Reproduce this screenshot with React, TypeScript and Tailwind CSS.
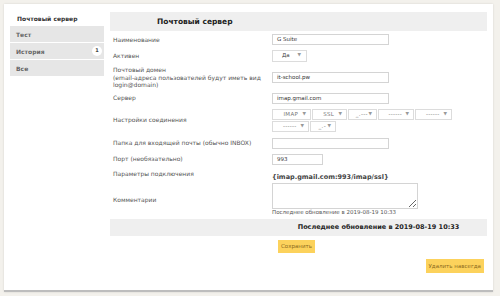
import React from 'react';

const font = { fontFamily: '"DejaVu Sans", Verdana, sans-serif' };

const Field = ({ value = '', w = 'w-[117px]' }: { value?: string; w?: string }) => (
    <div className={`${w} h-[11px] border border-[#d4d4d4] bg-white px-[4px] text-[5.5px] leading-[9px] text-[#333]`}>
        {value}
    </div>
);

const Select = ({ label, w }: { label: string; w: string }) => (
    <div className={`${w} h-[11px] border border-[#dcdcdc] bg-white flex items-center justify-between pl-[6px] pr-[4px] text-[5.5px] text-[#777]`}>
        <span className="flex-1 text-center tracking-[0.3px]">{label}</span>
        <span className="text-[4.5px] text-[#999]">▼</span>
    </div>
);

const Row = ({ label, h, children }: { label: React.ReactNode; h: string; children: React.ReactNode }) => (
    <div className={`flex items-center ${h}`}>
        <div className="w-[162px] pl-[3px] text-[6px] leading-[7.5px] text-[#555]">{label}</div>
        <div className="flex-1">{children}</div>
    </div>
);

const navItems = [
    { name: 'Тест' },
    { name: 'История', badge: '1' },
    { name: 'Все' },
];

export default function App() {
    return (
        <div className="w-[500px] h-[296px] bg-[#f3f1ec] pl-[4px] pt-[4px]" style={font}>
            <div className="w-[489px] h-[288px] bg-white border-b-2 border-[#bdbdbd] shadow-[0_0_2px_rgba(0,0,0,0.12)] flex gap-[6px] pl-[6px] pt-[8px]">
                {/* Sidebar */}
                <div className="w-[94px] flex flex-col">
                    <div className="h-[13px] pl-[7px] flex items-center text-[6px] font-bold text-[#333]">
                        Почтовый сервер
                    </div>
                    <div className="flex flex-col gap-[1px] pt-[1px]">
                        {navItems.map((it) => (
                            <div key={it.name} className="h-[16px] bg-[#e6e6e6] flex items-center justify-between pl-[6px] pr-[2px] text-[6px] font-bold text-[#666]">
                                <span>{it.name}</span>
                                {it.badge && (
                                    <span className="w-[10px] h-[10px] rounded-full bg-white flex items-center justify-center text-[5px] text-[#444]">
                                        {it.badge}
                                    </span>
                                )}
                            </div>
                        ))}
                    </div>
                </div>

                {/* Main form */}
                <div className="w-[377px] flex flex-col">
                    <div className="h-[19px] bg-[#efefef] flex items-center pl-[47px] text-[7.5px] font-bold text-[#222]">
                        Почтовый сервер
                    </div>
                    <div className="h-[1px]" />
                    <Row label="Наименование" h="h-[15px]">
                        <Field value="G Suite" />
                    </Row>
                    <Row label="Активен" h="h-[17px]">
                        <div className="w-[35px] h-[12px] border border-[#dcdcdc] flex items-center justify-between pl-[9px] pr-[5px] text-[5.5px] text-[#444]">
                            <span>Да</span>
                            <span className="text-[4.5px] text-[#999]">▼</span>
                        </div>
                    </Row>
                    <Row
                        label={
                            <>
                                Почтовый домен
                                <br />
                                (email-адреса пользователей будут иметь вид
                                <br />
                                login@domain)
                            </>
                        }
                        h="h-[27px]"
                    >
                        <Field value="it-school.pw" />
                    </Row>
                    <Row label="Сервер" h="h-[14px]">
                        <Field value="imap.gmail.com" />
                    </Row>
                    <Row label="Настройки соединения" h="h-[30px]">
                        <div className="flex flex-col gap-[1px]">
                            <div className="flex gap-[1px]">
                                <Select label="IMAP" w="w-[39px]" />
                                <Select label="SSL" w="w-[35px]" />
                                <Select label="_.---" w="w-[29px]" />
                                <Select label="------" w="w-[36px]" />
                                <Select label="------" w="w-[37px]" />
                            </div>
                            <div className="flex gap-[1px]">
                                <Select label="------" w="w-[37px]" />
                                <Select label="_.-" w="w-[26px]" />
                            </div>
                        </div>
                    </Row>
                    <Row label="Папка для входящей почты (обычно INBOX)" h="h-[16px]">
                        <Field />
                    </Row>
                    <Row label="Порт (необязательно)" h="h-[16px]">
                        <Field value="993" w="w-[51px]" />
                    </Row>
                    <Row label="Параметры подключения" h="h-[14px]">
                        <span className="text-[6.5px] font-bold text-[#444]">{'{imap.gmail.com:993/imap/ssl}'}</span>
                    </Row>
                    <Row label="Комментарии" h="h-[37px]">
                        <div className="flex flex-col">
                            <textarea readOnly className="block w-[146px] h-[26px] border border-[#d4d4d4] bg-white" />
                            <span className="text-[5.5px] leading-[7px] text-[#555]">Последнее обновление в 2019-08-19 10:33</span>
                        </div>
                    </Row>
                    <div className="h-[1px]" />
                    <div className="h-[17px] bg-[#efefef] flex items-center">
                        <div className="w-[160px]" />
                        <div className="flex-1 text-center text-[6.5px] font-bold text-[#222]">
                            Последнее обновление в 2019-08-19 10:33
                        </div>
                    </div>
                    <div className="flex pt-[4px] pl-[168px]">
                        <button className="h-[13px] px-[3px] bg-[#fcd25c] text-[5.5px] leading-[13px] text-[#8c6a1c]">Сохранить</button>
                    </div>
                    <div className="flex justify-end pt-[6px] pr-[3px]">
                        <button className="h-[14px] px-[3px] bg-[#fcd25c] text-[5.5px] leading-[14px] text-[#8c6a1c]">Удалить навсегда</button>
                    </div>
                </div>
            </div>
        </div>
    );
}
